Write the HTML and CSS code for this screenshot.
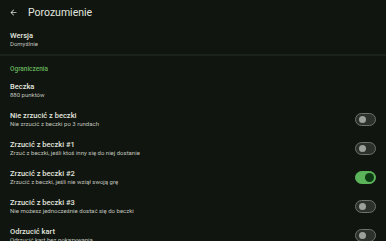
FILE: index.html
```html
<!DOCTYPE html>
<html lang="pl">
<head>
  <meta charset="UTF-8">
  <meta name="viewport" content="width=device-width, initial-scale=1.0">
  <title>Porozumienie</title>
  <link rel="stylesheet" href="styles.css">
</head>
<body>
  <header class="top-bar">
    <svg class="back" width="9" height="9" viewBox="0 0 24 24"><path d="M20 11H7.83l5.59-5.59L12 4l-8 8 8 8 1.41-1.41L7.83 13H20v-2z" fill="#d8dcd5"/></svg>
    <h1>Porozumienie</h1>
  </header>

  <div class="item">
    <div class="texts">
      <div class="name">Wersja</div>
      <div class="sub">Domyślnie</div>
    </div>
  </div>

  <div class="divider"></div>

  <div class="section">Ograniczenia</div>

  <div class="item">
    <div class="texts">
      <div class="name">Beczka</div>
      <div class="sub">880 punktów</div>
    </div>
  </div>

  <div class="item">
    <div class="texts">
      <div class="name">Nie zrzucić z beczki</div>
      <div class="sub">Nie zrzucić z beczki po 3 rundach</div>
    </div>
    <span class="switch"></span>
  </div>

  <div class="item">
    <div class="texts">
      <div class="name">Zrzucić z beczki #1</div>
      <div class="sub">Zrzuć z beczki, jeśli ktoś inny się do niej dostanie</div>
    </div>
    <span class="switch"></span>
  </div>

  <div class="item">
    <div class="texts">
      <div class="name">Zrzucić z beczki #2</div>
      <div class="sub">Zrzucić z beczki, jeśli nie wziął swoją grę</div>
    </div>
    <span class="switch on"></span>
  </div>

  <div class="item">
    <div class="texts">
      <div class="name">Zrzucić z beczki #3</div>
      <div class="sub">Nie możesz jednocześnie dostać się do beczki</div>
    </div>
    <span class="switch"></span>
  </div>

  <div class="item">
    <div class="texts">
      <div class="name">Odrzucić kart</div>
      <div class="sub">Odrzucić kart bez pokazywania</div>
    </div>
    <span class="switch"></span>
  </div>
</body>
</html>
```

FILE: styles.css
```css
body {
  margin: 0;
  background: #101510;
  color: #e2e5df;
  font-family: Roboto, "Liberation Sans", sans-serif;
  overflow: hidden;
}
.top-bar {
  display: flex;
  align-items: center;
  height: 25px;
  padding-left: 9px;
}
.back {
  margin-right: 10px;
}
h1 {
  margin: 0;
  font-size: 10.5px;
  font-weight: 400;
  color: #e2e5df;
}
.item {
  display: flex;
  align-items: center;
  padding: 3px 10px 3px 10px;
  height: 23px;
}
.texts {
  flex: 1;
}
.name {
  font-size: 7.5px;
  font-weight: 500;
  line-height: 9px;
}
.sub {
  font-size: 6px;
  line-height: 8px;
  color: #c0c4bc;
}
.divider {
  height: 2px;
  background: #1b211b;
}
.section {
  color: #66b35c;
  font-size: 6.5px;
  font-weight: 500;
  padding: 9px 10px 0;
  height: 11px;
}
.switch {
  position: relative;
  width: 19px;
  height: 11px;
  border: 1px solid #6c7169;
  border-radius: 7px;
  background: #2c312b;
}
.switch::after {
  content: "";
  position: absolute;
  left: 3px;
  top: 2px;
  width: 7px;
  height: 7px;
  border-radius: 50%;
  background: #9ca199;
}
.switch.on {
  background: #5bb35a;
  border-color: #5bb35a;
}
.switch.on::after {
  left: auto;
  right: 1px;
  top: 1px;
  width: 9px;
  height: 9px;
  background: #0d3a12;
}
```
